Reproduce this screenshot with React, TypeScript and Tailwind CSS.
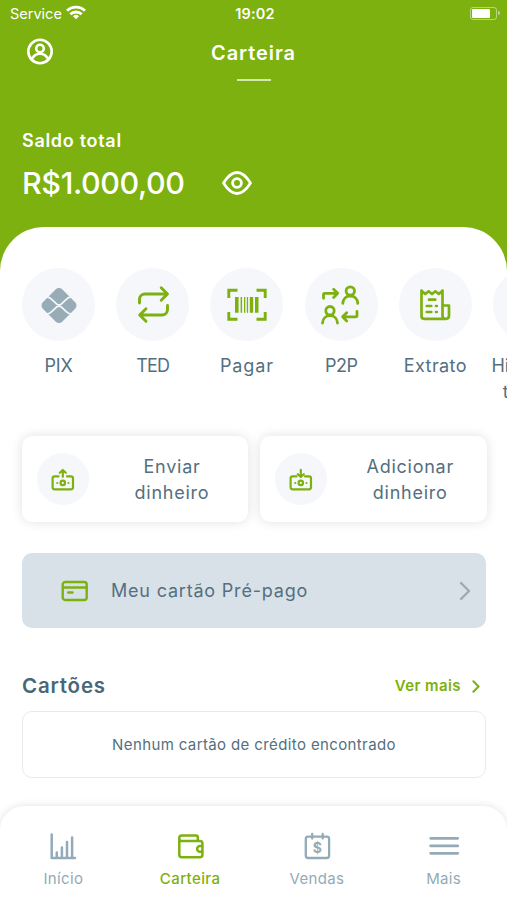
import type { ReactNode } from 'react';

type IconProps = { className?: string };

const stroke = {
  fill: 'none',
  stroke: 'currentColor',
  strokeLinecap: 'round',
  strokeLinejoin: 'round',
} as const;

function UserIcon() {
  return (
    <svg width="28" height="28" viewBox="0 0 28 28" strokeWidth="2.6" {...stroke}>
      <circle cx="14" cy="13.5" r="11.7" />
      <circle cx="14" cy="10.5" r="3.8" />
      <path d="M5.8 21.3c1.7-3.6 4.700-5.500 8.200-5.500s6.500 1.900 8.200 5.500" />
    </svg>
  );
}

function EyeIcon() {
  return (
    <svg width="32" height="28" viewBox="0 0 32 28" strokeWidth="2.800" {...stroke}>
      <path d="M2.500 14C5.500 9.200 9.500 3.500 16 3.500S26.500 9.200 29.500 14C26.500 18.800 22.500 24.500 16 24.500S5.500 18.800 2.500 14z" />
      <circle cx="16" cy="14" r="4.400" />
    </svg>
  );
}

function PixIcon() {
  return (
    <svg width="40" height="40" viewBox="0 0 40 40" className="text-[#97acb6]">
      <rect x="6.300" y="6.800" width="27.400" height="27.400" rx="4.500" fill="currentColor" transform="rotate(45 20 20.500)" />
      <g fill="none" stroke="#f5f7fb" strokeWidth="1.700">
        <path d="M6 12.200h2.500c2 0 3 1 4.200 2.200l4.800 4.400c1.500 1.400 3.500 1.400 5 0l4.800-4.400c1.200-1.200 2.200-2.200 4.200-2.200H34" />
        <path d="M6 28.800h2.500c2 0 3-1 4.200-2.200l4.800-4.400c1.500-1.400 3.500-1.400 5 0l4.800 4.400c1.200 1.200 2.200 2.200 4.200 2.200H34" />
      </g>
    </svg>
  );
}

function TedIcon() {
  return (
    <svg width="40" height="40" viewBox="0 0 40 40" strokeWidth="2.900" {...stroke}>
      <path d="M6.500 18v-3.500A5.500 5.500 0 0 1 12 9h22M28.200 2.700 34.500 9l-6.300 6.300" />
      <path d="M34.500 20.500v4A5.500 5.500 0 0 1 29 30H7M13 23.700 6.700 30l6.300 6.300" />
    </svg>
  );
}

function BarcodeIcon() {
  return (
    <svg width="40" height="40" viewBox="0 0 40 40">
      <path
        d="M1.800 13V5.300h8.700M29.500 5.300h8.700V13M38.200 27v7.300h-8.700M10.500 34.300H1.800V27"
        fill="none"
        stroke="currentColor"
        strokeWidth="2.900"
      />
      <path
        d="M8 12h3.600v15.800H8zM13.600 12h1.500v15.800h-1.500zM17 12h1.300v15.800H17zM19.800 12h1.300v15.800h-1.300zM22.800 12h3.400v15.800h-3.400zM28 12h3.500v15.800H28z"
        fill="currentColor"
      />
    </svg>
  );
}

function PeopleIcon() {
  return (
    <svg width="40" height="40" viewBox="0 0 40 40" strokeWidth="2.800" {...stroke}>
      <circle cx="29.300" cy="6" r="4.200" />
      <path d="M21.800 18.300c.3-4.500 3.300-7.300 7.500-7.300s7.200 2.800 7.500 7.300" />
      <circle cx="9" cy="25.700" r="4.200" />
      <path d="M1.500 38c.3-4.500 3.300-7.300 7.500-7.300s7.200 2.800 7.500 7.300" />
      <path d="M2.500 13.300V9.600q0-1.300 1.300-1.300H16.600M12.600 4.200l4.100 4.100-4.100 4.100" />
      <path d="M36 26.500v4q0 1.300-1.300 1.300H21.700M25.700 27.700l-4.100 4.100 4.100 4.100" />
    </svg>
  );
}

function ReceiptIcon() {
  return (
    <svg width="40" height="40" viewBox="0 0 40 40" strokeWidth="2.700" {...stroke}>
      <path d="M6.500 5.700v25.600q0 2.500 2.500 2.500h22q3 0 3-3V20.500h-6.500M27.500 5.700v25.100q0 3 2.500 3M6.500 5.700l3.700 3.300 3.400-2.700 3.400 2.700 3.400-2.700 3.400 2.700 3.700-3.300" />
      <path d="M14 14.700h6.300M11.800 21h4.500M21 21h.8M11.800 27h4.500M21 27h.8" />
    </svg>
  );
}

function MoneyIcon({ direction }: { direction: 'up' | 'down' }) {
  return (
    <svg width="26" height="26" viewBox="0 0 26 26" strokeWidth="2.200" {...stroke}>
      <path d="M8.500 10.400H4.600q-2 0-2 2v8.900q0 2 2 2h16.400q2 0 2-2v-8.900q0-2-2-2H17" />
      <circle cx="12.800" cy="16.900" r="2.200" />
      <path d="M7.200 16.900h.1M18.400 16.900h.1" strokeWidth="2" />
      {direction === 'up' ? (
        <path d="M12.800 10.800V4.300M9.800 6.800l3-2.800 3 2.800" />
      ) : (
        <path d="M12.800 3.800v6.700M9.800 8.200l3 2.800 3-2.800" />
      )}
    </svg>
  );
}

function CardIcon() {
  return (
    <svg width="28" height="22" viewBox="0 0 28 22" strokeWidth="2.400" {...stroke}>
      <rect x="1.700" y="2" width="24" height="18" rx="2.500" />
      <path d="M2.500 7.500h22.500M7.200 12.500h4.300" />
    </svg>
  );
}

function ChevronIcon({ className }: IconProps) {
  return (
    <svg viewBox="0 0 12 20" className={className} {...stroke}>
      <path d="m2 2 8 8-8 8" />
    </svg>
  );
}

function ChartIcon() {
  return (
    <svg width="30" height="30" viewBox="0 0 30 30" strokeWidth="2.500" {...stroke}>
      <path d="M3.700 3.500v23.500h23.200M8.800 26.500v-5M13.900 26.500v-10M19 26.500V11M24.100 26.500V6.500" />
    </svg>
  );
}

function WalletIcon() {
  return (
    <svg width="30" height="30" viewBox="0 0 30 30" strokeWidth="2.500" {...stroke}>
      <path d="M4.300 8.500V7q0-2.500 2.500-2.500h14.200q1.800 0 1.800 1.800v3.400M4.300 7.700q0 2.200 2.500 2.200h18.300q2.300 0 2.300 2.300v11.500q0 2.500-2.500 2.500H6.800q-2.500 0-2.500-2.500z" />
      <path d="M27.200 15h-2.200a2.900 2.900 0 0 0 0 5.800h2.200" />
    </svg>
  );
}

function CalendarIcon() {
  return (
    <svg width="30" height="30" viewBox="0 0 30 30" strokeWidth="2.300" {...stroke}>
      <rect x="3.800" y="5.700" width="23.300" height="21.300" rx="2.300" />
      <path d="M10.200 3v4.500M20.700 3v4.500" />
      <text
        x="15.400"
        y="21.800"
        textAnchor="middle"
        fill="currentColor"
        stroke="none"
        className="font-['Inter',sans-serif] text-[14px] font-bold"
      >
        $
      </text>
    </svg>
  );
}

function MenuIcon() {
  return (
    <svg width="32" height="30" viewBox="0 0 32 30" strokeWidth="2.800" {...stroke}>
      <path d="M2.700 7.300h27M2.700 14.900h27M2.700 22.300h27" />
    </svg>
  );
}

const shortcuts: { label: string; tracking: string; icon: ReactNode }[] = [
  { label: 'PIX', tracking: 'tracking-[-0.2px]', icon: <PixIcon /> },
  { label: 'TED', tracking: 'tracking-[-0.8px]', icon: <TedIcon /> },
  { label: 'Pagar', tracking: 'tracking-[0.9px]', icon: <BarcodeIcon /> },
  { label: 'P2P', tracking: 'tracking-[-0.5px]', icon: <PeopleIcon /> },
  { label: 'Extrato', tracking: 'tracking-[0.4px]', icon: <ReceiptIcon /> },
  { label: 'Histórico transf.', tracking: 'tracking-normal', icon: null },
];

const tabs = [
  { label: 'Início', icon: <ChartIcon />, active: false },
  { label: 'Carteira', icon: <WalletIcon />, active: true },
  { label: 'Vendas', icon: <CalendarIcon />, active: false },
  { label: 'Mais', icon: <MenuIcon />, active: false },
];

function StatusBar() {
  return (
    <div className="grid h-7 grid-cols-3 items-center pl-[10px] pr-[7px] font-['Inter',sans-serif]">
      <div className="flex items-center gap-1">
        <span className="text-[14.5px] leading-none">Service</span>
        <svg width="20" height="15" viewBox="0 0 20 15" className="-mt-1" fill="none" stroke="currentColor" strokeWidth="2.800">
          <path d="M1 5.800a13 13 0 0 1 18 0" />
          <path d="M4.300 9.300a8.200 8.200 0 0 1 11.400 0" />
          <path d="m10 14.300-3-3.100a4.300 4.300 0 0 1 6 0z" fill="currentColor" stroke="none" />
        </svg>
      </div>
      <span className="text-center text-[14.500px] font-semibold leading-none tracking-[0.2px]">19:02</span>
      <div className="-mt-0.5 flex items-center justify-end gap-px">
        <div className="h-[13px] w-[27px] rounded-[3px] border border-white/45 p-px">
          <div className="h-full w-[18px] rounded-[1px] bg-white" />
        </div>
        <div className="h-1 w-[1.5px] rounded-r bg-white/50" />
      </div>
    </div>
  );
}

function ActionCard({ direction, children }: { direction: 'up' | 'down'; children: ReactNode }) {
  return (
    <button className="flex h-[86px] flex-1 items-center rounded-[10px] bg-white pl-[15px] shadow-[0_0_12px_rgba(0,0,0,0.12)]">
      <span className="flex size-[52px] shrink-0 items-center justify-center rounded-full bg-[#f5f7fb] text-[#7cb10f]">
        <MoneyIcon direction={direction} />
      </span>
      <span className="ml-[30px] w-[106px] pt-0.5 text-center text-[18px] leading-[26.5px] tracking-[0.75px]">
        {children}
      </span>
    </button>
  );
}

export default function App() {
  return (
    <div className="flex h-[900px] w-[507px] flex-col overflow-hidden bg-[#7cb10f] font-['Inter',sans-serif] text-[#546f80]">
      <header className="h-[227px] shrink-0 text-white">
        <StatusBar />
        <div className="grid h-12 grid-cols-3 items-center px-[26px]">
          <UserIcon />
          <h1 className="pt-0.5 text-center text-[20px] font-semibold tracking-[0.9px]">Carteira</h1>
        </div>
        <div className="mx-auto mt-[3px] h-0.5 w-[34px] bg-[#d5e9ad]" />
        <div className="mt-11 px-[22px]">
          <p className="text-[18px] font-semibold leading-8 tracking-[0.7px]">Saldo total</p>
          <div className="mt-1.5 flex items-center">
            <span className="w-[199px] text-[30.5px] font-medium leading-10 tracking-[-0.4px]">R$1.000,00</span>
            <EyeIcon />
          </div>
        </div>
      </header>

      <main className="flex-1 rounded-t-[44px] bg-white pt-[41px]">
        <div className="flex h-[168px] overflow-hidden pl-[11.5px]">
          {shortcuts.map(({ label, tracking, icon }) => (
            <div key={label} className="flex w-[94.2px] shrink-0 flex-col items-center">
              <div className="flex size-[73px] items-center justify-center rounded-full bg-[#f5f7fb] text-[#7cb10f]">
                {icon}
              </div>
              <span className={`mt-3 text-center text-[18px] leading-[26px] ${tracking}`}>{label}</span>
            </div>
          ))}
        </div>

        <div className="flex w-[486.5px] gap-3 pl-[22px]">
          <ActionCard direction="up">
            Enviar
            <br />
            dinheiro
          </ActionCard>
          <ActionCard direction="down">
            Adicionar
            <br />
            dinheiro
          </ActionCard>
        </div>

        <button className="mx-[22px] mt-[31px] flex h-[75px] w-[464px] items-center rounded-[10px] bg-[#d8e1e7] pl-[39px] pr-[15px]">
          <span className="text-[#7cb10f]">
            <CardIcon />
          </span>
          <span className="ml-[22px] text-[18px] tracking-[0.8px]">Meu cartão Pré-pago</span>
          <ChevronIcon className="ml-auto h-5 w-3 stroke-[2.4px] text-[#97acb6]" />
        </button>

        <div className="mt-[42px] flex h-8 items-center justify-between pl-[22px] pr-[27px]">
          <h2 className="text-[20.5px] font-semibold tracking-[0.8px] text-[#486779]">Cartões</h2>
          <button className="flex items-center gap-[11px] text-[15px] font-semibold tracking-[0.4px] text-[#7cb10f]">
            Ver mais
            <ChevronIcon className="h-[13px] w-2 stroke-[3.2px]" />
          </button>
        </div>

        <div className="ml-[22px] mt-[9px] flex h-[67px] w-[464px] items-center justify-center rounded-[10px] border-[1.5px] border-[#e6eaec] pt-0.5 text-[15px] tracking-[0.38px]">
          Nenhum cartão de crédito encontrado
        </div>

        <nav className="mt-7 grid h-[94px] grid-cols-4 rounded-t-[24px] bg-white pt-[25px] shadow-[0_0_8px_rgba(0,0,0,0.12)]">
          {tabs.map(({ label, icon, active }) => (
            <button key={label} className="flex flex-col items-center text-[#93abb8]">
              <span className={active ? 'text-[#7cb10f]' : ''}>{icon}</span>
              <span
                className={
                  active
                    ? 'mt-1.5 text-[15px] font-medium leading-6 tracking-[0.4px] text-[#7cb10f]'
                    : 'mt-1.5 text-[15px] leading-6 tracking-[0.35px]'
                }
              >
                {label}
              </span>
            </button>
          ))}
        </nav>
      </main>
    </div>
  );
}
